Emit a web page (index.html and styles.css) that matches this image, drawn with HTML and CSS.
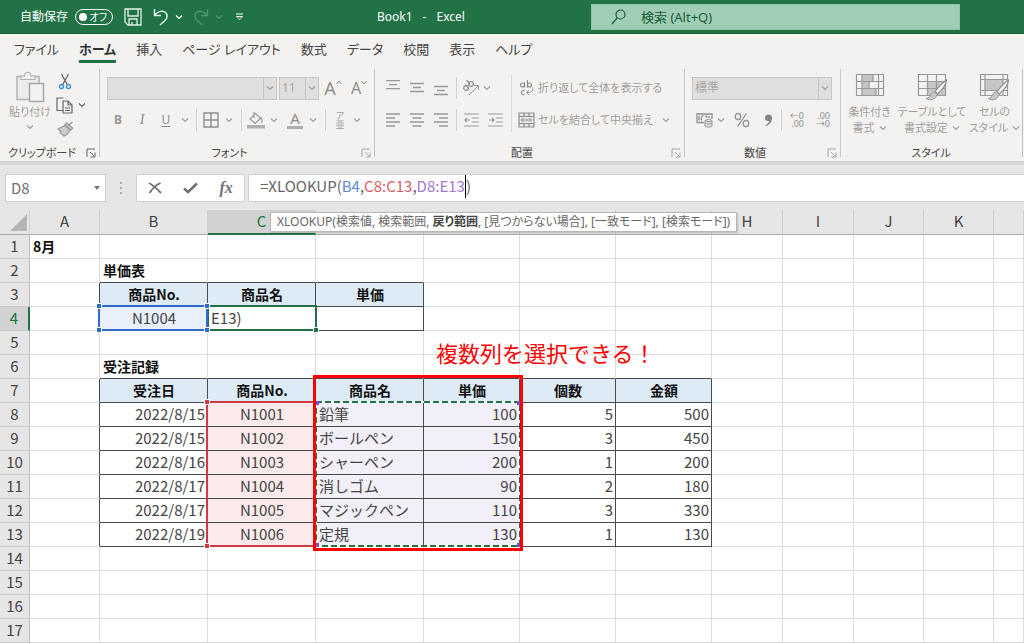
FILE: index.html
```html
<!DOCTYPE html>
<html lang="ja">
<head>
<meta charset="utf-8">
<title>Book1 - Excel</title>
<link rel="stylesheet" href="styles.css">
</head>
<body>
<svg class="defs" aria-hidden="true">
  <symbol id="chev" viewBox="0 0 8 8"><path d="M1 2.500 4 5.500 7 2.500" fill="none" stroke="currentColor" stroke-width="1.2"/></symbol>
  <symbol id="launch" viewBox="0 0 10 10"><path d="M1 9V1H9M4 4l4.500 4.500M9 4.500V9H4.500" fill="none" stroke="currentColor"/></symbol>
  <symbol id="brush" viewBox="0 0 24 24"><path d="M22.500 1c-3.500 2-8 7-11.500 11.500l2.500 2.500c5-4.500 9-10.500 9-14z" fill="#f3f2f1" stroke="#8f8f8f" stroke-width="1.200"/><path d="M10.500 13c-2.500 0-3.500 1.500-4 3.500-.5 1.500-2 2.500-4.500 3 4 2.500 10 1.500 11-4z" fill="#c8c8c8" stroke="#999"/></symbol>
</svg>

<header class="titlebar">
  <div class="quick">
    <label class="autosave">自動保存
      <input type="checkbox" class="sr">
      <span class="toggle"><i></i>オフ</span>
    </label>
    <button class="qb save" aria-label="保存"><svg width="18" height="18" viewBox="0 0 18 18"><path d="M1 1h16v16H4l-3-3zM4 1v7h10V1M5 17v-6h8v6M8 17v-3" fill="none" stroke="#e4efe9" stroke-width="1.300"/></svg></button>
    <button class="qb undo" aria-label="元に戻す"><svg width="16" height="18" viewBox="0 0 16 18"><path d="M1.500 1v6.500H8M1.500 7.500C5 3 10 2 12.500 4.500c3 3 1 6.500-1 8.500L7 17" fill="none" stroke="#e4efe9" stroke-width="1.500"/></svg></button>
    <button class="qb small" aria-label="元に戻す一覧"><svg width="8" height="8"><use href="#chev"/></svg></button>
    <button class="qb redo dim" aria-label="やり直し"><svg width="16" height="18" viewBox="0 0 16 18"><path d="M14.500 1v6.500H8M14.500 7.500C11 3 6 2 3.500 4.500c-3 3-1 6.500 1 8.500L9 17" fill="none" stroke="currentColor" stroke-width="1.500"/></svg></button>
    <button class="qb small dim" aria-label="やり直し一覧"><svg width="8" height="8"><use href="#chev"/></svg></button>
    <button class="qb custom" aria-label="クイック アクセスのカスタマイズ"><svg width="9" height="8" viewBox="0 0 9 8"><path d="M1 1h7M1.500 3.500h6L4.500 6.500z" fill="none" stroke="#fff"/></svg></button>
  </div>
  <div class="doc"><span>Book1</span><span>-</span><span>Excel</span></div>
  <label class="search">
    <svg width="16" height="16" viewBox="0 0 16 16"><circle cx="9.500" cy="5.500" r="4.500" fill="none" stroke="#185c37" stroke-width="1.200"/><path d="M6.300 8.700 1 15" stroke="#185c37" stroke-width="1.300"/></svg>
    <input type="text" placeholder="検索 (Alt+Q)" aria-label="検索">
  </label>
</header>

<nav class="tabs">
  <a href="#">ファイル</a><a href="#" class="on">ホーム</a><a href="#">挿入</a><a href="#">ページ レイアウト</a><a href="#">数式</a><a href="#">データ</a><a href="#">校閲</a><a href="#">表示</a><a href="#">ヘルプ</a>
</nav>

<section class="ribbon">
  <div class="group g-clip">
    <div class="tools clip">
      <button class="paste"><svg width="30" height="32" viewBox="0 0 30 32"><path d="M2 5.500h22v23H2z" fill="#ececec" stroke="#b0b0b0" stroke-width="1.500"/><path d="M6 8.500V5h3.500C9.500 0 16 0 16 5H20v3.500z" fill="#f3f2f1" stroke="#b0b0b0" stroke-width="1.200"/><path d="M14.500 12.500h14v18h-14z" fill="#f3f2f1" stroke="#a6a6a6" stroke-width="1.500"/></svg><span>貼り付け</span><svg width="8" height="8"><use href="#chev"/></svg></button>
      <div class="clipcol">
        <button aria-label="切り取り"><svg width="14" height="17" viewBox="0 0 14 17"><path d="M3.500 1 9.500 12M10.500 1 4.500 12" stroke="#666" stroke-width="1.300"/><circle cx="3.500" cy="13.500" r="2" fill="none" stroke="#3b91d0" stroke-width="1.400"/><circle cx="10.500" cy="13.500" r="2" fill="none" stroke="#3b91d0" stroke-width="1.400"/></svg></button>
        <button class="dark" aria-label="コピー"><svg width="17" height="17" viewBox="0 0 17 17"><path d="M7 13.500H1V1h6.500M7 4h5l4 4v8H7zM12 4v4h4M9 11h5M9 13.500h5" fill="none" stroke="#666" stroke-width="1.200"/></svg><svg width="8" height="8"><use href="#chev"/></svg></button>
        <button aria-label="書式のコピー"><svg width="17" height="16" viewBox="0 0 17 16"><path d="M15.500 1 11 5M8 4l6 5 1.500-2L9.500 2z" fill="#ddd" stroke="#999" stroke-width="1.300"/><path d="M8 4.500 1 8c1 1.500 2 2 3 2l-1 1.500 4 3.500c3-1 5-4 6-6z" fill="#ccc" stroke="#999" stroke-width="1.200"/></svg></button>
      </div>
    </div>
    <div class="cap dark"><span>クリップボード</span><button aria-label="クリップボードの詳細"><svg width="10" height="10"><use href="#launch"/></svg></button></div>
  </div>

  <div class="group g-font">
    <div class="tools">
      <div class="row">
        <span class="pick fname"><select aria-label="フォント"><option></option></select><svg width="8" height="8"><use href="#chev"/></svg></span>
        <span class="pick fsize"><select aria-label="フォント サイズ"><option>11</option></select><svg width="8" height="8"><use href="#chev"/></svg></span>
        <button class="w24 grow" aria-label="フォント サイズの拡大"><b class="a18">A</b><svg width="6" height="5" viewBox="0 0 6 5"><path d="M.5 4 3 1l2.500 3" fill="none" stroke="currentColor"/></svg></button>
        <button class="w24 grow" aria-label="フォント サイズの縮小"><b class="a16">A</b><svg width="6" height="5" viewBox="0 0 6 5"><path d="M.5 1 3 4l2.500-3" fill="none" stroke="currentColor"/></svg></button>
      </div>
      <div class="row tight">
        <button class="w24 bold">B</button><button class="w24 ital">I</button><button class="w24 und">U</button><button class="w14" aria-label="下線の種類"><svg width="8" height="8"><use href="#chev"/></svg></button><i class="sep w8"></i>
        <button class="w22" aria-label="罫線"><svg width="16" height="16" viewBox="0 0 16 16"><path d="M1 1h14v14H1zM8 1v14M1 8h14" fill="none" stroke="#8f8f8f" stroke-width="1.400"/></svg></button><button class="w14" aria-label="罫線の種類"><svg width="8" height="8"><use href="#chev"/></svg></button><i class="sep w10"></i>
        <button class="w20" aria-label="塗りつぶし"><svg width="18" height="18" viewBox="0 0 18 18"><path d="M3 8 8.500 2.500l5 5L8 12.500zM7 1v6M13.500 6c2 2 2 4 1 6" fill="none" stroke="#999" stroke-width="1.200"/><path d="M0 14h18v3.500H0z" fill="#b0aead"/></svg></button><button class="w16" aria-label="塗りつぶしの色"><svg width="8" height="8"><use href="#chev"/></svg></button>
        <button class="w26 fcolor" aria-label="フォントの色"><b>A</b></button><button class="w10" aria-label="フォントの色一覧"><svg width="8" height="8"><use href="#chev"/></svg></button><i class="sep w14"></i>
        <button class="w16 furi"><span>ア</span><span>亜</span></button><button class="w18" aria-label="ふりがな"><svg width="8" height="8"><use href="#chev"/></svg></button>
      </div>
    </div>
    <div class="cap"><span>フォント</span><button aria-label="フォントの詳細"><svg width="10" height="10"><use href="#launch"/></svg></button></div>
  </div>

  <div class="group g-align">
    <div class="alignbox">
      <div class="tools">
        <div class="row tight">
          <button class="w24" aria-label="上揃え"><svg width="14" height="16" viewBox="0 0 14 16"><path d="M0 .7h14M3 4.700h8M0 8.700h14" stroke="#999" stroke-width="1.300"/></svg></button><button class="w24" aria-label="中央揃え(縦)"><svg width="14" height="16" viewBox="0 0 14 16"><path d="M0 3.500h14M3 7.500h8M0 11.500h14" stroke="#999" stroke-width="1.300"/></svg></button><button class="w24" aria-label="下揃え"><svg width="14" height="16" viewBox="0 0 14 16"><path d="M0 6.500h14M3 10.500h8M0 14.500h14" stroke="#999" stroke-width="1.300"/></svg></button><i class="sep w6"></i>
          <button class="w24" aria-label="方向"><svg width="18" height="18" viewBox="0 0 18 18"><g fill="none" stroke="#8f8f8f" stroke-width="1.200"><circle cx="4" cy="9" r="2.300"/><path d="M3.500 5.500 7 10"/><circle cx="9" cy="5" r="2.300"/><path d="M4.500 1 8 5"/></g><path d="M7 16 16 7M12 6.500h4.500V11" fill="none" stroke="#999"/></svg></button><button class="w8" aria-label="方向一覧"><svg width="8" height="8"><use href="#chev"/></svg></button>
        </div>
        <div class="row tight">
          <button class="w24" aria-label="左揃え"><svg width="14" height="16" viewBox="0 0 14 16"><path d="M0 2h14M0 6h9M0 10h14M0 14h9" stroke="#999" stroke-width="1.300"/></svg></button><button class="w24" aria-label="中央揃え"><svg width="14" height="16" viewBox="0 0 14 16"><path d="M0 2h14M2.500 6h9M0 10h14M2.500 14h9" stroke="#999" stroke-width="1.300"/></svg></button><button class="w24" aria-label="右揃え"><svg width="14" height="16" viewBox="0 0 14 16"><path d="M0 2h14M5 6h9M0 10h14M5 14h9" stroke="#999" stroke-width="1.300"/></svg></button><i class="sep w6"></i>
          <button class="w24" aria-label="インデントを減らす"><svg width="15" height="16" viewBox="0 0 15 16"><path d="M0 2h15M8 6h7M8 10h7M0 14h15M1 8h5M3 6 1 8l2 2" fill="none" stroke="#999" stroke-width="1.200"/></svg></button><button class="w24" aria-label="インデントを増やす"><svg width="15" height="16" viewBox="0 0 15 16"><path d="M0 2h15M8 6h7M8 10h7M0 14h15M1 8h5M4 6l2 2-2 2" fill="none" stroke="#999" stroke-width="1.200"/></svg></button>
        </div>
      </div>
      <div class="tools wide">
        <div class="row"><button class="txt"><svg width="17" height="18" viewBox="0 0 17 18"><g fill="none" stroke="#8f8f8f" stroke-width="1.200"><circle cx="4.500" cy="6" r="2"/><path d="M6.500 3.500v5M9.500 1v7.500"/><circle cx="11.500" cy="6" r="2"/><path d="M6.500 11.500c-4-1-4 5 0 4"/></g><path d="M14.500 8.500c1 4-1 5-6 5M11 11 8.500 13.500 11 16" fill="none" stroke="#999"/></svg>折り返して全体を表示する</button></div>
        <div class="row"><button class="txt"><svg width="17" height="16" viewBox="0 0 17 16"><path d="M1 1h15v14H1zM1 4.500h15M1 11.500h15M6 1v3.500M11 1v3.500M6 11.500V15M11 11.500V15" fill="#e6e6e6" stroke="#8f8f8f" stroke-width="1.200"/><path d="M3.500 8h10M5.500 6l-2 2 2 2M11.500 6l2 2-2 2" fill="none" stroke="#8f8f8f"/></svg>セルを結合して中央揃え</button><button class="w14" aria-label="結合の種類"><svg width="8" height="8"><use href="#chev"/></svg></button></div>
      </div>
    </div>
    <div class="cap"><span>配置</span><button aria-label="配置の詳細"><svg width="10" height="10"><use href="#launch"/></svg></button></div>
  </div>

  <div class="group g-num">
    <div class="tools">
      <div class="row"><span class="pick nfmt"><select aria-label="表示形式"><option>標準</option></select><svg width="8" height="8"><use href="#chev"/></svg></span></div>
      <div class="row tight">
        <button class="w26" aria-label="通貨表示形式"><svg width="17" height="16" viewBox="0 0 17 16"><path d="M8 10.500H1V2h15v5M3 4v4.500M6 8.500C4.500 7 5 4 7.500 4M9 4c2 0 2 1 2 2M13 4v2" fill="none" stroke="#8f8f8f" stroke-width="1.300"/><path d="M9 8.500v5.500c2 1.500 5 1.500 7 0V8.500c-2 1.500-5 1.500-7 0c2-1.500 5-1.500 7 0M9 11c2 1.500 5 1.500 7 0" fill="#ddd" stroke="#999"/></svg></button><button class="w8" aria-label="通貨一覧"><svg width="8" height="8"><use href="#chev"/></svg></button>
        <button class="w34" aria-label="パーセント"><svg width="16" height="16" viewBox="0 0 16 16"><path d="M12.500 1.500l-9 13" stroke="#8f8f8f" stroke-width="1.300"/><ellipse cx="4" cy="4.500" rx="2.700" ry="3.200" fill="none" stroke="#8f8f8f" stroke-width="1.300"/><ellipse cx="12" cy="11.500" rx="2.700" ry="3.200" fill="none" stroke="#8f8f8f" stroke-width="1.300"/></svg></button>
        <button class="w18" aria-label="桁区切り"><svg width="9" height="14" viewBox="0 0 9 14"><path d="M8 5c0 4-3 7-6 8l-.5-.8C4 11 5 9.500 5 8 2.500 8.500 1 7 1 5a3.500 3.500 0 0 1 7 0" fill="#858585"/></svg></button><i class="sep w8"></i>
        <button class="w22 dec" aria-label="小数点以下の表示桁数を増やす"><span>←0</span><span>.00</span></button><button class="w26 dec" aria-label="小数点以下の表示桁数を減らす"><span>.00</span><span>→0</span></button>
      </div>
    </div>
    <div class="cap"><span>数値</span><button aria-label="数値の詳細"><svg width="10" height="10"><use href="#launch"/></svg></button></div>
  </div>

  <div class="group g-style">
    <div class="bigs">
      <button><svg width="32" height="29" viewBox="0 0 32 29"><path d="M2.500 2.500h27v21h-27z" fill="#f3f2f1"/><path d="M8 2.500h11v7H8zM8 9.500h7v7H8zM8 16.500h14v7H8z" fill="#c6c6c6"/><path d="M2.500 2.500h27v21h-27zM2.500 9.500h27M2.500 16.500h27M8 2.500v21M24.500 2.500v21M19 2.500v7M15 9.500v7M22 16.500v7" fill="none" stroke="#999" stroke-width="1.200"/></svg><span>条件付き</span><span>書式 <svg width="8" height="8"><use href="#chev"/></svg></span></button>
      <button><svg width="32" height="29" viewBox="0 0 32 29"><path d="M12 9.500h17.500v14H12z" fill="#c6c6c6"/><path d="M2.500 2.500h27v21h-27zM2.500 9.500h27M2.500 16.500h27M11.500 2.500v21M20.500 2.500v21" fill="none" stroke="#999" stroke-width="1.200"/><use href="#brush" x="8" y="7" width="24" height="24"/></svg><span>テーブルとして</span><span>書式設定 <svg width="8" height="8"><use href="#chev"/></svg></span></button>
      <button><svg width="32" height="29" viewBox="0 0 32 29"><path d="M7 7.500h18v11H7z" fill="#c6c6c6"/><path d="M2.500 2.500h27v21h-27zM2.500 7.500h27M2.500 18.500h27M7 2.500v21M25 2.500v21" fill="none" stroke="#999" stroke-width="1.200"/><use href="#brush" x="8" y="7" width="24" height="24"/></svg><span>セルの</span><span>スタイル <svg width="8" height="8"><use href="#chev"/></svg></span></button>
    </div>
    <div class="cap"><span>スタイル</span></div>
  </div>
</section>

<section class="fbar">
  <div class="namebox"><input type="text" value="D8" aria-label="名前ボックス"><svg width="6" height="4" viewBox="0 0 6 4"><path d="M0 0h6L3 4z" fill="#777"/></svg></div>
  <svg class="grip" width="4" height="14" viewBox="0 0 4 14"><path d="M1 1h2v2H1zM1 6h2v2H1zM1 11h2v2H1z" fill="#aaa"/></svg>
  <div class="fbtns">
    <button aria-label="キャンセル"><svg width="14" height="12" viewBox="0 0 14 12"><path d="M1 1c4 2 8 6 12 10M12.500 1C8 3 4 7 1.500 11" fill="none" stroke="#707070" stroke-width="1.800"/></svg></button>
    <button aria-label="入力"><svg width="15" height="12" viewBox="0 0 15 12"><path d="M1 6.500 5 10 14 1.500" fill="none" stroke="#707070" stroke-width="2.500"/></svg></button>
    <button class="fx">fx</button>
  </div>
  <div class="formula" role="textbox" contenteditable="true" spellcheck="false" aria-label="数式バー">=XLOOKUP(<span class="blue">B4</span>,<span class="red">C8:C13</span>,<span class="purple">D8:E13</span><i class="caret"></i>)</div>
</section>

<main class="sheet">
  <table>
    <colgroup><col class="c30"><col class="c70"><col class="c108"><col class="c108"><col class="c108"><col class="c96"><col class="c96"><col class="c96"><col class="c71"><col class="c71"><col class="c70"><col class="c70"><col></colgroup>
    <thead><tr><th class="corner"><svg width="17" height="17" viewBox="0 0 17 17"><path d="M17 0v17H0z" fill="#b4b4b4"/></svg></th><th>A</th><th>B</th><th class="sel">C</th><th aria-label="D"></th><th aria-label="E"></th><th aria-label="F"></th><th aria-label="G"></th><th>H</th><th>I</th><th>J</th><th>K</th><th></th></tr></thead>
    <tbody>
      <tr><th>1</th><td class="t">8月</td><td></td><td></td><td></td><td></td><td></td><td></td><td></td><td></td><td></td><td></td><td></td></tr>
      <tr><th>2</th><td></td><td class="t u">単価表</td><td class="u"></td><td class="u"></td><td></td><td></td><td></td><td></td><td></td><td></td><td></td><td></td></tr>
      <tr><th>3</th><td class="l"></td><td class="h">商品No.</td><td class="h">商品名</td><td class="h">単価</td><td></td><td></td><td></td><td></td><td></td><td></td><td></td><td></td></tr>
      <tr><th class="sel">4</th><td class="l"></td><td class="k mid tb">N1004</td><td class="k">E13)</td><td class="k"></td><td></td><td></td><td></td><td></td><td></td><td></td><td></td><td></td></tr>
      <tr><th>5</th><td></td><td></td><td></td><td></td><td></td><td></td><td></td><td></td><td></td><td></td><td></td><td></td></tr>
      <tr><th>6</th><td></td><td class="t u">受注記録</td><td class="u"></td><td class="u"></td><td class="u"></td><td class="u"></td><td class="u"></td><td></td><td></td><td></td><td></td><td></td></tr>
      <tr><th>7</th><td class="l"></td><td class="h">受注日</td><td class="h">商品No.</td><td class="h">商品名</td><td class="h">単価</td><td class="h">個数</td><td class="h">金額</td><td></td><td></td><td></td><td></td><td></td></tr>
      <tr><th>8</th><td class="l"></td><td class="k n">2022/8/15</td><td class="k mid tr">N1001</td><td class="k tp">鉛筆</td><td class="k n tp">100</td><td class="k n">5</td><td class="k n">500</td><td></td><td></td><td></td><td></td><td></td></tr>
      <tr><th>9</th><td class="l"></td><td class="k n">2022/8/15</td><td class="k mid tr">N1002</td><td class="k tp">ボールペン</td><td class="k n tp">150</td><td class="k n">3</td><td class="k n">450</td><td></td><td></td><td></td><td></td><td></td></tr>
      <tr><th>10</th><td class="l"></td><td class="k n">2022/8/16</td><td class="k mid tr">N1003</td><td class="k tp">シャーペン</td><td class="k n tp">200</td><td class="k n">1</td><td class="k n">200</td><td></td><td></td><td></td><td></td><td></td></tr>
      <tr><th>11</th><td class="l"></td><td class="k n">2022/8/17</td><td class="k mid tr">N1004</td><td class="k tp">消しゴム</td><td class="k n tp">90</td><td class="k n">2</td><td class="k n">180</td><td></td><td></td><td></td><td></td><td></td></tr>
      <tr><th>12</th><td class="l"></td><td class="k n">2022/8/17</td><td class="k mid tr">N1005</td><td class="k tp">マジックペン</td><td class="k n tp">110</td><td class="k n">3</td><td class="k n">330</td><td></td><td></td><td></td><td></td><td></td></tr>
      <tr><th>13</th><td class="l"></td><td class="k n">2022/8/19</td><td class="k mid tr">N1006</td><td class="k tp">定規</td><td class="k n tp">130</td><td class="k n">1</td><td class="k n">130</td><td></td><td></td><td></td><td></td><td></td></tr>
      <tr><th>14</th><td></td><td></td><td></td><td></td><td></td><td></td><td></td><td></td><td></td><td></td><td></td><td></td></tr>
      <tr><th>15</th><td></td><td></td><td></td><td></td><td></td><td></td><td></td><td></td><td></td><td></td><td></td><td></td></tr>
      <tr><th>16</th><td></td><td></td><td></td><td></td><td></td><td></td><td></td><td></td><td></td><td></td><td></td><td></td></tr>
      <tr><th>17</th><td></td><td></td><td></td><td></td><td></td><td></td><td></td><td></td><td></td><td></td><td></td><td></td></tr>
    </tbody>
  </table>
  <div class="range r-edit"><i class="se"></i></div>
  <div class="range r-blue"><i class="nw"></i><i class="ne"></i><i class="sw"></i><i class="se"></i></div>
  <div class="range r-red"><i class="nw"></i><i class="sw"></i></div>
  <svg class="ants" width="206" height="146" viewBox="0 0 206 146"><rect x="1" y="1" width="204" height="144" fill="none" stroke="#fff" stroke-width="2"/><rect x="1" y="1" width="204" height="144" fill="none" stroke="#217346" stroke-width="2" stroke-dasharray="6 3"/><path d="M0 0h4v4H0zM202 0h4v4h-4zM0 142h4v4H0zM202 142h4v4h-4z" fill="#8548c8"/></svg>
  <div class="frame"></div>
  <p class="note">複数列を選択できる！</p>
  <div class="tip">XLOOKUP(検索値, 検索範囲, <b>戻り範囲</b>, [見つからない場合], [一致モード], [検索モード])</div>
</main>
</body>
</html>
```
FILE: styles.css
```css
* { box-sizing: border-box; }
body {
  margin: 0;
  height: 100vh;
  overflow: hidden;
  display: flex;
  flex-direction: column;
  background: #e6e6e6;
  color: #444;
  font: 13px/16px "Noto Sans", "Noto Sans CJK JP", sans-serif;
  font-feature-settings: "palt";
}
button, input, select { font: inherit; color: inherit; font-feature-settings: inherit; }
button {
  display: inline-flex;
  align-items: center;
  justify-content: center;
  padding: 0;
  border: 0;
  background: none;
}
svg { flex: none; display: block; }
.defs { position: absolute; width: 0; height: 0; }
.sr { position: absolute; opacity: 0; width: 1px; height: 1px; margin: 0; }

/* title bar */
.titlebar {
  flex: none;
  height: 34px;
  display: grid;
  grid-template-columns: 377px 214px minmax(0, 1fr) 64px;
  align-items: center;
  background: #217346;
  color: #fff;
  border-bottom: 1px solid #1a6039;
}
.quick { display: flex; align-items: center; padding-left: 20px; }
.autosave { display: flex; align-items: center; gap: 7px; font-size: 12px; font-feature-settings: normal; }
.toggle {
  display: flex;
  align-items: center;
  justify-content: space-between;
  width: 38px;
  height: 16px;
  padding: 0 5px 0 3px;
  border: 1px solid #fff;
  border-radius: 8px;
  font-size: 10px;
  font-feature-settings: "palt";
}
.toggle i { width: 8px; height: 8px; border-radius: 50%; background: #fff; }
.qb { height: 24px; }
.save { margin-left: 11px; }
.undo { margin-left: 11px; }
.small { width: 20px; }
.redo { margin-left: 4px; }
.custom { margin-left: 6px; }
.dim { color: #4f9370; }
.doc { display: flex; gap: 10px; font-size: 12px; }
.search {
  display: flex;
  align-items: center;
  gap: 14px;
  height: 26px;
  padding-left: 19px;
  background: #a0cdb5;
  border: 1px solid #8fc2a6;
}
.search input { flex: 1; border: 0; padding: 0; background: none; font-size: 13px; }
.search input::placeholder { color: #185c37; opacity: 1; }

/* tabs */
.tabs { flex: none; display: flex; gap: 20px; height: 30px; padding: 7px 14px 0; background: #f3f2f1; }
.tabs a { height: 22px; color: #444; text-decoration: none; white-space: nowrap; }
.tabs .on { font-weight: 700; color: #333; border-bottom: 3px solid #217346; }

/* ribbon */
.ribbon {
  flex: none;
  display: flex;
  height: 98px;
  padding-top: 5px;
  background: #f3f2f1;
  border-bottom: 1px solid #cfcfcf;
  color: #a19f9d;
  white-space: nowrap;
  font-size: 11px;
}
.group {
  flex: none;
  display: flex;
  flex-direction: column;
  justify-content: space-between;
  background: linear-gradient(#c8c6c4, #c8c6c4) right top / 1px 88px no-repeat;
}
.g-clip { width: 100px; }
.g-font { width: 275px; }
.g-align { width: 310px; }
.g-num { width: 156px; }
.g-style { width: 182px; }
.tools { display: flex; flex-direction: column; gap: 8px; padding: 7px 0 0 6px; }
.row { display: flex; align-items: center; gap: 2px; height: 24px; }
.tight { gap: 0; }
.row button { height: 24px; }
.cap { display: flex; align-items: center; height: 16px; color: #444; padding-right: 2px; }
.cap span { flex: 1; text-align: center; }
.cap button { width: 14px; color: #a8a6a4; }
.cap.dark button { color: #666; }
.clip { flex-direction: row; align-items: flex-start; gap: 3px; padding: 0 0 0 7px; }
.paste { flex-direction: column; width: 46px; padding-top: 2px; }
.paste span { line-height: 18px; }
.paste > svg:last-child { margin-top: 2px; }
.clipcol { display: flex; flex-direction: column; align-items: flex-start; }
.clipcol button { height: 24px; min-width: 18px; gap: 5px; }
.clipcol .dark { color: #666; }
.pick { position: relative; display: flex; align-items: center; height: 23px; background: #e1dfdd; border: 1px solid #c8c6c4; }
.pick select { width: 100%; height: 100%; padding: 0 2px; border: 0; background: none; appearance: none; color: #a8a6a4; font-size: 12px; }
.pick svg { position: absolute; right: 2px; }
.pick::after { content: ""; position: absolute; right: 12px; top: 0; bottom: 0; border-right: 1px solid #c8c6c4; }
.fname { width: 170px; }
.fsize { width: 40px; }
.nfmt { width: 140px; }
.g-font .row:first-child, .g-num .row:first-child { padding-left: 1px; }
.w6 { width: 6px; } .w8 { width: 8px; } .w10 { width: 10px; } .w14 { width: 14px; }
.w16 { width: 16px; } .w18 { width: 18px; } .w20 { width: 20px; } .w22 { width: 22px; }
.w24 { width: 24px; } .w26 { width: 26px; } .w34 { width: 34px; }
.sep { display: flex; justify-content: center; height: 22px; }
.sep::before { content: ""; border-left: 1px solid #d4d2d0; }
.grow { color: #8f8f8f; }
.grow svg { align-self: flex-start; margin-top: 4px; }
.grow b { font-weight: 400; }
.a18 { font-size: 18px; }
.a16 { font-size: 16px; }
.row .bold, .row .und { font-size: 12px; }
.bold { font-weight: 700; color: #999; }
.row .ital { font-family: "Liberation Serif", serif; font-style: italic; font-size: 14px; }
.und { text-decoration: underline; text-underline-offset: 2px; }
.ital, .und { color: #8f8f8f; }
.fcolor b { width: 16px; font-weight: 400; font-size: 15px; line-height: 15px; color: #8f8f8f; border-bottom: 3px solid #b0aead; }
.furi { flex-direction: column; font-size: 9px; line-height: 9px; }
.alignbox { display: flex; }
.alignbox .tools:first-child { width: 136px; }
.wide { flex: 1; padding-left: 7px; background: linear-gradient(#dddbd9, #dddbd9) 0 6px / 1px 100% no-repeat; }
.txt { gap: 3px; }
.wide .w14 { margin-left: 4px; }
.dec { flex-direction: column; align-items: flex-end; padding-right: 3px; font-size: 9px; line-height: 8px; color: #8f8f8f; }
.bigs { display: flex; justify-content: center; padding-top: 3px; }
.bigs button { flex-direction: column; min-width: 56px; }
.bigs button > svg { margin-bottom: 3px; }
.bigs span { display: flex; gap: 4px; align-items: center; line-height: 16px; }

/* formula bar */
.fbar { flex: none; display: flex; align-items: center; height: 48px; padding: 0 0 0 5px; border-top: 3px solid #d8d8d8; color: #707070; }
.namebox, .fbtns, .formula { display: flex; align-items: center; height: 28px; background: #fff; border: 1px solid #d0d0d0; }
.namebox { width: 101px; padding-right: 5px; }
.namebox input { flex: 1; min-width: 0; border: 0; padding: 0 5px; background: none; font: 15px/20px "Noto Sans CJK JP", sans-serif; }
.grip { margin: 0 13px; }
.fbtns { width: 109px; margin-right: 3px; }
.fbtns button { flex: 1; height: 26px; }
.fx { font: italic 700 16px/20px "Liberation Serif", serif; }
.formula { flex: 1; padding: 0 0 3px 11px; border-right: 0; font: 15px/20px "Noto Sans CJK JP", sans-serif; color: #666; font-feature-settings: normal; }
.blue { color: #5b8bd6; }
.red { color: #da6068; }
.purple { color: #a079d0; }
.caret { width: 1px; height: 23px; background: #000; }

/* sheet */
.sheet { position: relative; flex: 1; overflow: hidden; background: #fff; font: 15px/20px "Noto Sans CJK JP", sans-serif; font-feature-settings: normal; }
table { width: 100%; table-layout: fixed; border-collapse: separate; border-spacing: 0; }
.c30 { width: 30px; } .c70 { width: 70px; } .c71 { width: 71px; } .c96 { width: 96px; } .c108 { width: 108px; }
th { height: 24px; padding: 0 0 2px; font-weight: 400; color: #444; background: #e6e6e6; border-right: 1px solid #bdbdbd; border-bottom: 1px solid #c9c9c9; }
thead th { height: 25px; border-right-color: #cfcfcf; border-bottom-color: #ababab; }
thead .sel { background: #d2d2d2; color: #217346; border-bottom: 2px solid #217346; }
tbody .sel { background: #d2d2d2; color: #217346; border-right: 2px solid #217346; }
.corner svg { margin: 3px 1px 0 10px; }
td { height: 24px; padding: 0 2px 2px 3px; overflow: hidden; white-space: nowrap; border-right: 1px solid #dcdcdc; border-bottom: 1px solid #dcdcdc; }
.t, .h { font-weight: 700; color: #111; font-size: 14px; }
.h { text-align: center; background: #ddebf7; }
.h, .k { border-color: #4a4a4a; }
.l { border-right-color: #4a4a4a; }
.u { border-bottom-color: #4a4a4a; }
.n { text-align: right; }
.mid { text-align: center; }
.tb { background: #e9f0fb; }
.tr { background: #faeaea; }
.tp { background: #f2eff9; }

/* overlays on the sheet */
.range { position: absolute; border: 2px solid; }
.range i { position: absolute; width: 4px; height: 4px; background: currentColor; outline: 1px solid #fff; }
.nw { left: -3px; top: -3px; } .ne { right: -3px; top: -3px; }
.sw { left: -3px; bottom: -3px; } .se { right: -3px; bottom: -3px; }
.r-blue { left: 98px; top: 95px; width: 110px; height: 26px; color: #2f6bcb; }
.r-edit { left: 207px; top: 95px; width: 110px; height: 26px; color: #217346; }
.r-red { left: 206px; top: 191px; width: 110px; height: 146px; color: #cc3a45; }
.ants { position: absolute; left: 315px; top: 191px; }
.frame { position: absolute; left: 313px; top: 165px; width: 210px; height: 176px; border: 3px solid #f00; }
.note { position: absolute; left: 436px; top: 129px; margin: 0; font-size: 22px; line-height: 26px; color: #f00; }
.tip {
  position: absolute;
  left: 270px;
  top: 2px;
  height: 20px;
  padding: 0 6px;
  background: #fff;
  border: 1px solid #b8b8b8;
  box-shadow: 1px 1px 2px #0003;
  white-space: nowrap;
  font: 12px/17px "Noto Sans", "Noto Sans CJK JP", sans-serif;
  font-feature-settings: "palt";
  color: #666;
}
.tip b { color: #444; }
```
